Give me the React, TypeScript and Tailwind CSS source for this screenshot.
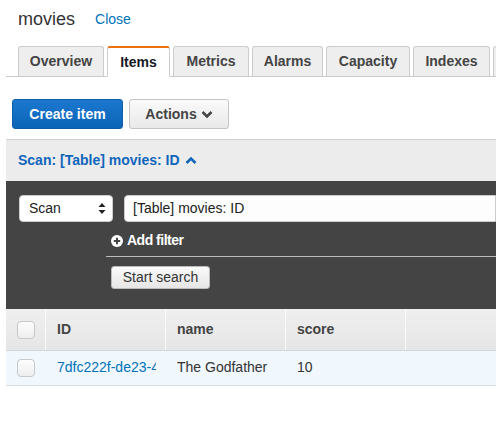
import React from "react";

const font = { fontFamily: '"Liberation Sans", Arial, Helvetica, sans-serif' };

function Tab({ label, w, active }: { label: string; w: string; active?: boolean }) {
  if (active) {
    return (
      <div
        className={`${w} h-[31px] -mb-px flex items-center justify-center rounded-t-[3px] border border-[#ccc] border-b-white border-t-2 border-t-[#ec7211] bg-white text-[14px] font-bold text-[#16191f]`}
      >
        {label}
      </div>
    );
  }
  return (
    <div
      className={`${w} h-[30px] flex shrink-0 items-center justify-center rounded-t-[3px] border border-b-0 border-[#ccc] bg-[#eeeeee] text-[14px] font-bold text-[#444]`}
    >
      {label}
    </div>
  );
}

function Checkbox() {
  return (
    <div className="h-[18px] w-[18px] rounded-[4px] border border-[#c8c8c8] bg-gradient-to-b from-[#fdfdfd] to-[#eeeeee]" />
  );
}

export default function App() {
  return (
    <div style={font} className="relative h-[432px] w-[496px] overflow-hidden bg-white">
      {/* header */}
      <div className="flex h-[40px] items-center pl-[18px] pb-[2px]">
        <span className="text-[18px] text-[#333]">movies</span>
        <span className="ml-[20px] text-[14px] text-[#0073bb]">Close</span>
      </div>

      {/* tabs */}
      <div className="ml-[6px] mt-[6px] flex items-end gap-[3px] border-b border-[#cccccc] pl-[12px] w-[600px]">
        <Tab label="Overview" w="w-[86px]" />
        <Tab label="Items" w="w-[63px]" active />
        <Tab label="Metrics" w="w-[76px]" />
        <Tab label="Alarms" w="w-[71px]" />
        <Tab label="Capacity" w="w-[84px]" />
        <Tab label="Indexes" w="w-[77px]" />
        <Tab label="" w="w-[60px]" />
      </div>

      {/* buttons */}
      <div className="mt-[22px] flex gap-[6px] pl-[12px]">
        <div className="flex h-[30px] w-[111px] items-center justify-center rounded-[3px] border border-[#0f5fa8] bg-gradient-to-b from-[#1b78cf] to-[#0a64b6] text-[14px] font-bold text-white">
          Create item
        </div>
        <div className="flex h-[30px] w-[100px] items-center justify-center gap-[4px] rounded-[3px] border border-[#c4c4c4] bg-gradient-to-b from-[#fafafa] to-[#e9e9e9] text-[14px] font-bold text-[#444]">
          Actions
          <svg width="12" height="9" viewBox="0 0 12 9">
            <path d="M1.5 2 L6 6.5 L10.5 2" stroke="#444" strokeWidth="2.6" fill="none" />
          </svg>
        </div>
      </div>

      {/* scan bar */}
      <div className="ml-[6px] mt-[10px] flex h-[42px] items-center gap-[5px] border-t border-[#cfcfcf] bg-[#ececec] pl-[12px] text-[14px] font-bold text-[#1166bb]">
        Scan: [Table] movies: ID
        <svg width="12" height="9" viewBox="0 0 12 9">
          <path d="M1.5 7 L6 2.5 L10.5 7" stroke="#1166bb" strokeWidth="2.6" fill="none" />
        </svg>
      </div>

      {/* dark panel */}
      <div className="ml-[6px] h-[128px] bg-[#444444] pt-[14px]">
        <div className="flex items-center gap-[11px] pl-[13px]">
          <div className="flex h-[27px] w-[94px] items-center justify-between rounded-[4px] border border-[#ccc] bg-white pl-[9px] pr-[6px] text-[14px] text-[#222]">
            Scan
            <svg width="8" height="13" viewBox="0 0 8 13">
              <path d="M0.5 5 L4 1 L7.5 5 Z" fill="#222" />
              <path d="M0.5 8 L4 12 L7.5 8 Z" fill="#222" />
            </svg>
          </div>
          <div className="flex h-[27px] flex-1 items-center rounded-l-[4px] border border-[#ccc] bg-[#fdfdfd] pl-[8px] text-[14px] text-[#222]">
            [Table] movies: ID
          </div>
        </div>
        <div className="ml-[100px] mt-[9px] flex h-[26px] items-center gap-[4px] border-b border-[#bbbbbb] pl-[5px] pb-[6px] text-[14px] font-bold tracking-[-0.5px] text-white">
          <svg width="12" height="12" viewBox="0 0 12 12">
            <circle cx="6" cy="6" r="6" fill="white" />
            <path d="M6 2.8 V9.2 M2.8 6 H9.2" stroke="#444" strokeWidth="2" />
          </svg>
          Add filter
        </div>
        <div className="ml-[105px] mt-[9px] flex h-[23px] w-[99px] items-center justify-center rounded-[3px] border border-[#bbb] bg-gradient-to-b from-[#fafafa] to-[#e6e6e6] text-[14px] text-[#333]">
          Start search
        </div>
      </div>

      {/* table */}
      <div className="ml-[6px]">
        <div className="flex h-[42px] border-b border-[#d5d5d5] bg-gradient-to-b from-[#efefef] to-[#e6e6e6] text-[14px] font-bold text-[#444]">
          <div className="flex w-[40px] items-center border-r border-[#fafafa] pl-[11px]">
            <Checkbox />
          </div>
          <div className="flex w-[120px] items-center border-r border-[#fafafa] pl-[11px]">ID</div>
          <div className="flex w-[120px] items-center border-r border-[#fafafa] pl-[11px]">name</div>
          <div className="flex w-[120px] items-center border-r border-[#fafafa] pl-[11px]">score</div>
          <div className="flex-1" />
        </div>
        <div className="flex h-[35px] border-b border-[#dddddd] bg-[#f0f7fd] pb-[1px] text-[14px] text-[#333]">
          <div className="flex w-[40px] items-center pl-[11px]">
            <Checkbox />
          </div>
          <div className="flex w-[120px] items-center overflow-hidden whitespace-nowrap pl-[11px] pr-[10px] text-[#0073bb]">
            <span className="overflow-hidden">7dfc222f-de23-4a2b</span>
          </div>
          <div className="flex w-[120px] items-center pl-[11px]">The Godfather</div>
          <div className="flex w-[120px] items-center pl-[11px]">10</div>
        </div>
      </div>
    </div>
  );
}
